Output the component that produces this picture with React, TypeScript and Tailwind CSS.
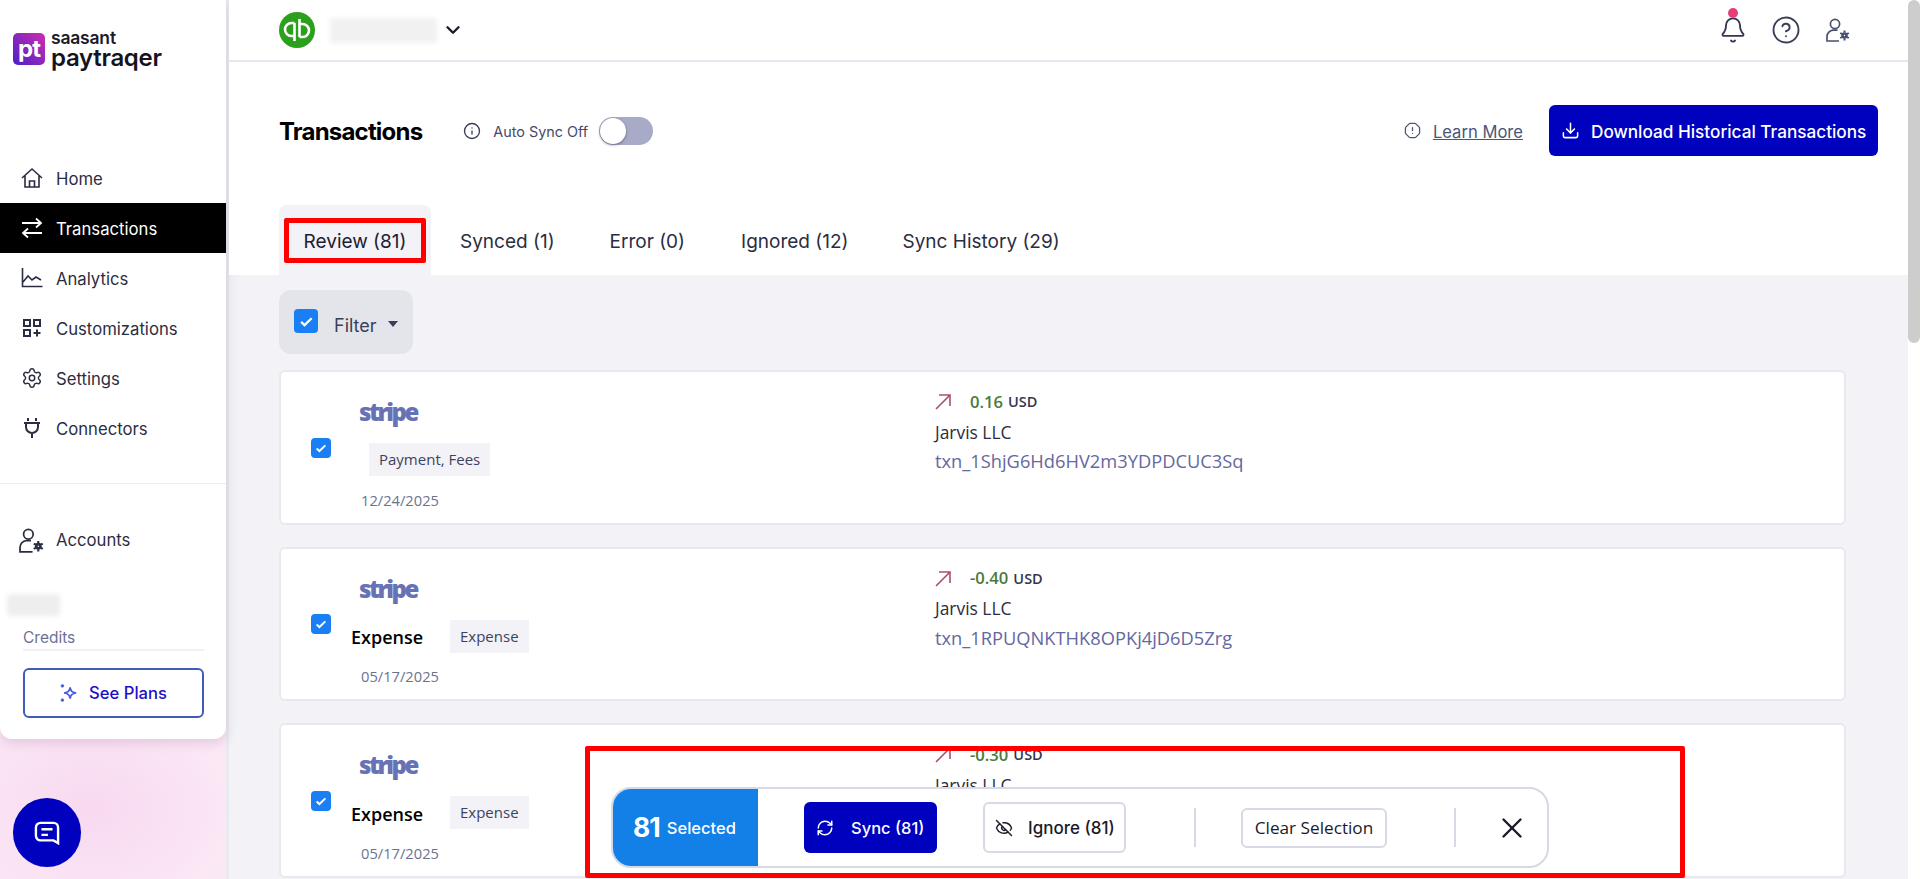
import { ChevronDown, CircleHelp, Download, EyeOff, Info, OctagonAlert, RefreshCw, Settings, X, Bell } from 'lucide-react'

const sans = "font-['Inter',sans-serif]"
const body = "font-['Open_Sans',sans-serif]"

function NavItem({ label, icon, active }: { label: string; icon: React.ReactNode; active?: boolean }) {
  return (
    <div className={`flex h-[50px] items-center ${active ? 'bg-black text-white' : 'text-[#2b2d42]'}`}>
      <div className="flex w-[56px] justify-center pl-[7px]">{icon}</div>
      <span className="pt-[4px] text-[16.7px]">{label}</span>
    </div>
  )
}

function UserGear({ className }: { className: string }) {
  return (
    <svg viewBox="0 0 24 24" fill="none" stroke="currentColor" strokeWidth="1.7" className={className}>
      <circle cx="9" cy="6" r="4.6" />
      <path d="M13 23H1v-4.5C1 15 4 12.5 7 12.2h4.5" />
      <circle cx="18.5" cy="17.5" r="2" strokeWidth="2.6" />
      <path d="M18.5 12.5v2M18.5 20.5v2M14.2 15l1.8 1M21 19l1.8 1M14.2 20l1.8-1M21 16l1.8-1" strokeWidth="2" />
    </svg>
  )
}

function Check({ size }: { size: string }) {
  return (
    <div className={`flex shrink-0 items-center justify-center rounded-[4px] bg-[#1a7ff5] ${size}`}>
      <svg viewBox="0 0 16 16" className="h-[70%] w-[70%]" fill="none" stroke="white" strokeWidth="2.2">
        <path d="M3 8.5l3.2 3L13 5" />
      </svg>
    </div>
  )
}

function Card({ title, tag, date, amount, txn }: { title?: string; tag: string; date: string; amount: string; txn: string }) {
  return (
    <div className="flex h-[154.5px] shrink-0 items-center rounded-md border-2 border-[#e8e8ee] bg-white">
      <div className="ml-[30px] mr-[20px] mt-[1px]">
        <Check size="h-[20px] w-[20px]" />
      </div>
      <div className={`flex h-full w-[584px] flex-col pt-[26px] ${body}`}>
        <div className="ml-[8px] flex h-[28px] items-center text-[24px] font-extrabold tracking-[-2.5px] text-[#6772b5]">stripe</div>
        <div className="mt-[17px] flex h-[33px] items-center">
          {title ? (
            <span className="w-[99px] pt-[3px] text-[18px] font-semibold text-black">{title}</span>
          ) : (
            <span className="w-[18px]" />
          )}
          <span className="flex h-[33px] items-center bg-[#f2f2f7] px-[10px] text-[15px] font-medium text-[#3e4260]">{tag}</span>
        </div>
        <div className="ml-[10px] mt-[12px] flex h-[24px] items-center text-[14.7px] text-[#6b7290]">{date}</div>
      </div>
      <div className={`flex h-full flex-col pt-[20px] ${body}`}>
        <div className="flex h-[20px] items-center">
          <svg viewBox="0 0 16 16" className="h-[16px] w-[16px]" fill="none" stroke="#a85068" strokeWidth="1.6">
            <path d="M1 15L15 1M4 1h11v11" />
          </svg>
          <span className="ml-[19px] text-[16.6px] font-semibold text-[#4a7a3a]">{amount}</span>
          <span className="ml-[5px] text-[14.5px] font-semibold text-[#33364e]">USD</span>
        </div>
        <div className="mt-[10px] flex h-[20px] items-center text-[17.4px] text-[#2a2c40]">Jarvis LLC</div>
        <div className="mt-[7px] flex h-[24px] items-center whitespace-nowrap text-[18.3px] text-[#6468a0]">{txn}</div>
      </div>
    </div>
  )
}

export default function App() {
  return (
    <div className={`relative flex h-[879px] w-[1920px] overflow-hidden bg-[#f2f2f7] ${sans}`}>
      {/* sidebar */}
      <aside className="flex w-[229px] shrink-0 flex-col border-r-[3px] border-[#e9e9f0] bg-[#fbe8f5] bg-[radial-gradient(150px_110px_at_90px_810px,#f8d9f0,#fbe8f5)]">
        <div className="flex h-[739px] flex-col rounded-b-xl bg-white shadow-[0_4px_12px_rgba(120,60,120,0.18)]">
          <div className="flex h-[153px] shrink-0 items-start pl-[13px] pt-[33px]">
            <div className="flex h-[32px] w-[32px] items-center justify-center rounded-[5px] bg-[linear-gradient(45deg,#4a20c8,#d02cb0)] text-[24px] font-bold leading-none tracking-[-1px] text-white">pt</div>
            <div className="-mt-[3px] ml-[6px] flex flex-col">
              <span className="h-[16px] text-[17.5px] font-semibold leading-[16px] tracking-[-0.2px] text-[#1a1a2a]">saasant</span>
              <span className="h-[24px] text-[24px] font-semibold leading-[24px] tracking-[-0.3px] text-[#14141f]">paytraqer</span>
            </div>
          </div>
          <NavItem
            label="Home"
            icon={
              <svg viewBox="0 0 22 22" fill="none" stroke="currentColor" strokeWidth="1.6" className="h-[22px] w-[22px]">
                <path d="M1 11L11 2l10 9M4 9v11h14V9M8.5 20v-6h5v6" />
              </svg>
            }
          />
          <NavItem
            active
            label="Transactions"
            icon={
              <svg viewBox="0 0 22 22" fill="none" stroke="currentColor" strokeWidth="1.8" className="h-[22px] w-[22px]">
                <path d="M1 6h19M15 1.5L20 6l-5 4.5M21 16H2M7 11.5L2 16l5 4.5" />
              </svg>
            }
          />
          <NavItem
            label="Analytics"
            icon={
              <svg viewBox="0 0 22 22" fill="none" stroke="currentColor" strokeWidth="1.6" className="h-[22px] w-[22px]">
                <path d="M1.5 1v18.5h20M2 15l5-6 4 4 4-3 5 3" />
              </svg>
            }
          />
          <NavItem
            label="Customizations"
            icon={
              <svg viewBox="0 0 20 20" fill="none" stroke="currentColor" strokeWidth="2" className="h-[20px] w-[20px]">
                <rect x="2" y="2" width="6" height="6" />
                <rect x="12" y="2" width="6" height="6" />
                <rect x="2" y="12" width="6" height="6" />
                <path d="M15 11.5v7M11.5 15h7" />
              </svg>
            }
          />
          <NavItem label="Settings" icon={<Settings className="h-[22px] w-[22px]" strokeWidth={1.6} />} />
          <NavItem
            label="Connectors"
            icon={
              <svg viewBox="0 0 20 22" fill="none" stroke="currentColor" strokeWidth="2" className="h-[22px] w-[20px]">
                <path d="M6 1v3M14 1v3M2 6h16M4 6v4a6 6 0 0 0 12 0V6M10 16v5" />
              </svg>
            }
          />
          <div className="mt-[30px] h-[1px] shrink-0 bg-[#ececf1]" />
          <div className="flex h-[111px] shrink-0 items-center pt-[2px] text-[#2b2d42]">
            <div className="flex w-[56px] justify-center pl-[7px]">
              <UserGear className="h-[25px] w-[25px]" />
            </div>
            <span className="text-[16.7px]">Accounts</span>
          </div>
          <div className="ml-[7px] -mt-[1px] h-[22px] w-[53px] rounded bg-[#eeeeee] blur-[2px]" />
          <div className="ml-[23px] mr-[22px] mt-[13px] border-b-2 border-[#f1f1f5] pb-[2px] text-[15.5px] leading-[18px] text-[#6c7096]">Credits</div>
          <div className="mx-[23px] mt-[17px] flex h-[50px] w-[181px] items-center justify-center gap-[9px] rounded-md border-2 border-[#3f5cb8] pr-[2px] text-[16.6px] font-medium text-[#1a10c8]">
            <svg viewBox="0 0 20 20" className="h-[22px] w-[22px]" fill="none" stroke="#4a5ce0" strokeWidth="1.6">
              <path d="M11 5c.6 3.4 1.6 4.4 5.5 5-3.9.6-4.9 1.6-5.5 5-.6-3.4-1.6-4.4-5.5-5 3.9-.6 4.9-1.6 5.5-5z" />
              <path d="M4 2v3M2.5 3.5h3M4 15v3M2.5 16.5h3" />
            </svg>
            See Plans
          </div>
        </div>
        <div className="ml-[13px] mt-[59px] flex h-[69px] w-[68px] items-center justify-center rounded-full bg-[#0000bf]">
          <svg viewBox="0 0 28 26" className="h-[24px] w-[26px]" fill="none" stroke="white" strokeWidth="2.6">
            <path d="M7 2h14a5 5 0 0 1 5 5v17l-5-3H7a5 5 0 0 1-5-5V7a5 5 0 0 1 5-5z" />
            <path d="M8 9h12M8 15h7" />
          </svg>
        </div>
      </aside>

      {/* main */}
      <main className="flex min-w-0 flex-1 flex-col">
        <div className="flex h-[62px] shrink-0 items-center border-b-2 border-[#e6e6ee] bg-white pl-[50px] pr-[58px]">
          <svg viewBox="0 0 36 36" className="h-[36px] w-[36px]">
            <circle cx="18" cy="18" r="18" fill="#2ca01c" />
            <path d="M15.5 11v18M14.5 24h-2a6.5 6.5 0 0 1 0-13h3" fill="none" stroke="white" strokeWidth="2.6" />
            <path d="M20.5 7v18M21.5 12h2a6.5 6.5 0 0 1 0 13h-3" fill="none" stroke="white" strokeWidth="2.6" />
          </svg>
          <div className="ml-[15px] h-[25px] w-[107px] bg-[#f1f1f1] blur-[2px]" />
          <ChevronDown className="ml-[5px] h-[22px] w-[22px] text-[#1a1a2a]" strokeWidth={2.6} />
          <div className="relative ml-auto flex h-[32px] w-[30px] items-center justify-center">
            <Bell className="h-[28px] w-[28px] text-[#33364e]" strokeWidth={1.6} />
            <span className="absolute left-[10px] top-[-6px] h-[10px] w-[10px] rounded-full bg-[#e83e78]" />
          </div>
          <CircleHelp className="ml-[23px] h-[30px] w-[30px] text-[#3a3f58]" strokeWidth={1.5} />
          <div className="ml-[25px] text-[#4a5070]">
            <UserGear className="h-[24px] w-[24px]" />
          </div>
        </div>

        <div className="shrink-0 bg-white pl-[50px] pr-[30px]">
          <div className="flex h-[143px] items-start pt-[43px]">
            <h1 className="flex h-[51px] items-center pt-[2px] text-[24px] font-bold tracking-[-0.8px] text-black">Transactions</h1>
            <div className="ml-[41px] flex h-[51px] items-center">
              <Info className="h-[18px] w-[18px] text-[#3a3f58]" strokeWidth={1.8} />
              <span className="ml-[12px] pt-[3px] text-[14.4px] text-[#464a68]">Auto Sync Off</span>
              <div className="ml-[11px] flex h-[28px] w-[54px] items-center rounded-full bg-[#a8abc8] pl-[1px]">
                <div className="h-[26px] w-[26px] rounded-full bg-white shadow-[0_1px_3px_rgba(0,0,0,0.4)]" />
              </div>
            </div>
            <div className="ml-auto flex h-[51px] items-center">
              <OctagonAlert className="h-[17px] w-[17px] text-[#4a5578]" strokeWidth={1.8} />
              <span className="ml-[12px] pt-[3px] text-[16.6px] text-[#4a5578] underline">Learn More</span>
              <div className="ml-[26px] flex h-[51px] w-[329px] items-center rounded-md bg-[#0000bf] pl-[12px] text-[17.2px] font-medium text-white">
                <Download className="h-[19px] w-[19px]" strokeWidth={1.9} />
                <span className="ml-[11px] pt-[3px]">Download Historical Transactions</span>
              </div>
            </div>
          </div>
          <div className="flex h-[70px] text-[19px] text-[#2b2d42]">
            <div className="flex w-[152px] items-center justify-center rounded-t-lg bg-[#f2f2f7] pt-[4px] text-[#1e2030]">Review (81)</div>
            <div className="ml-[29px] flex items-center pt-[4px]">Synced (1)</div>
            <div className="ml-[55px] flex items-center pt-[4px]">Error (0)</div>
            <div className="ml-[56px] flex items-center pt-[4px]">Ignored (12)</div>
            <div className="ml-[54px] flex items-center pt-[4px]">Sync History (29)</div>
          </div>
        </div>

        <div className="flex flex-col pl-[50px] pr-[62px] pt-[15px]">
          <div className="flex h-[64px] w-[134px] items-center rounded-xl bg-[#e4e5ea] pl-[15px]">
            <div className="-mt-[2px]">
              <Check size="h-[24px] w-[24px]" />
            </div>
            <span className="ml-[16px] pt-[6px] text-[18px] text-[#3a3f58]">Filter</span>
            <span className="ml-[11px] mt-[4px] h-0 w-0 border-x-[5px] border-t-[6px] border-x-transparent border-t-[#3a3f58]" />
          </div>
          <div className="mt-[16px] flex flex-col gap-[22px]">
            <Card tag="Payment, Fees" date="12/24/2025" amount="0.16" txn="txn_1ShjG6Hd6HV2m3YDPDCUC3Sq" />
            <Card title="Expense" tag="Expense" date="05/17/2025" amount="-0.40" txn="txn_1RPUQNKTHK8OPKj4jD6D5Zrg" />
            <Card title="Expense" tag="Expense" date="05/17/2025" amount="-0.30" txn="txn_1RPUQNKTHK8OPKj4jD6D5Zrg" />
          </div>
        </div>
      </main>

      {/* scrollbar */}
      <div className="w-[12px] shrink-0 bg-white">
        <div className="h-[343px] rounded-[6px] bg-[#cdcdcd]" />
      </div>

      {/* selection bar */}
      <div className="absolute left-[611px] top-[787px] flex h-[81px] w-[938px] items-center rounded-[20px] border-2 border-[#d8d8e6] bg-white">
        <div className="flex h-full w-[145px] items-center justify-center gap-[7px] rounded-l-[18px] bg-[#1380e8] pr-[2px] text-white">
          <span className="pt-[1px] text-[26.5px] font-bold tracking-[-1px]">81</span>
          <span className="pt-[1px] text-[16.5px] font-medium">Selected</span>
        </div>
        <div className="ml-[46px] flex h-[51px] w-[133px] items-center rounded-md bg-[#0000bf] pl-[12px] text-[16.5px] font-medium text-white">
          <RefreshCw className="h-[18px] w-[18px]" strokeWidth={2} />
          <span className="ml-[17px] pt-[2px]">Sync (81)</span>
        </div>
        <div className="ml-[46px] flex h-[51px] w-[143px] items-center rounded-md border-2 border-[#d8d8e6] pl-[10px] text-[17px] font-medium text-[#1a1a2a]">
          <EyeOff className="h-[18px] w-[18px]" strokeWidth={1.9} />
          <span className="ml-[15px] pt-[2px]">Ignore (81)</span>
        </div>
        <div className="ml-[68px] h-[39px] w-[2px] bg-[#d8d8e6]" />
        <div className={`ml-[45px] flex h-[40px] w-[146px] items-center justify-center rounded-md border-2 border-[#d8d8e6] pt-[1px] text-[17.2px] font-medium text-[#1a1a2a] ${body}`}>Clear Selection</div>
        <div className="ml-[67px] h-[39px] w-[2px] bg-[#d8d8e6]" />
        <X className="ml-[39px] h-[34px] w-[34px] text-[#1a1a2a]" strokeWidth={1.7} />
      </div>

      {/* red annotation boxes */}
      <div className="absolute left-[284px] top-[218px] h-[45px] w-[142px] rounded-[2px] border-[5px] border-[#ff0000]" />
      <div className="absolute left-[585px] top-[746px] h-[132px] w-[1100px] rounded-[2px] border-[5px] border-[#ff0000]" />
    </div>
  )
}
